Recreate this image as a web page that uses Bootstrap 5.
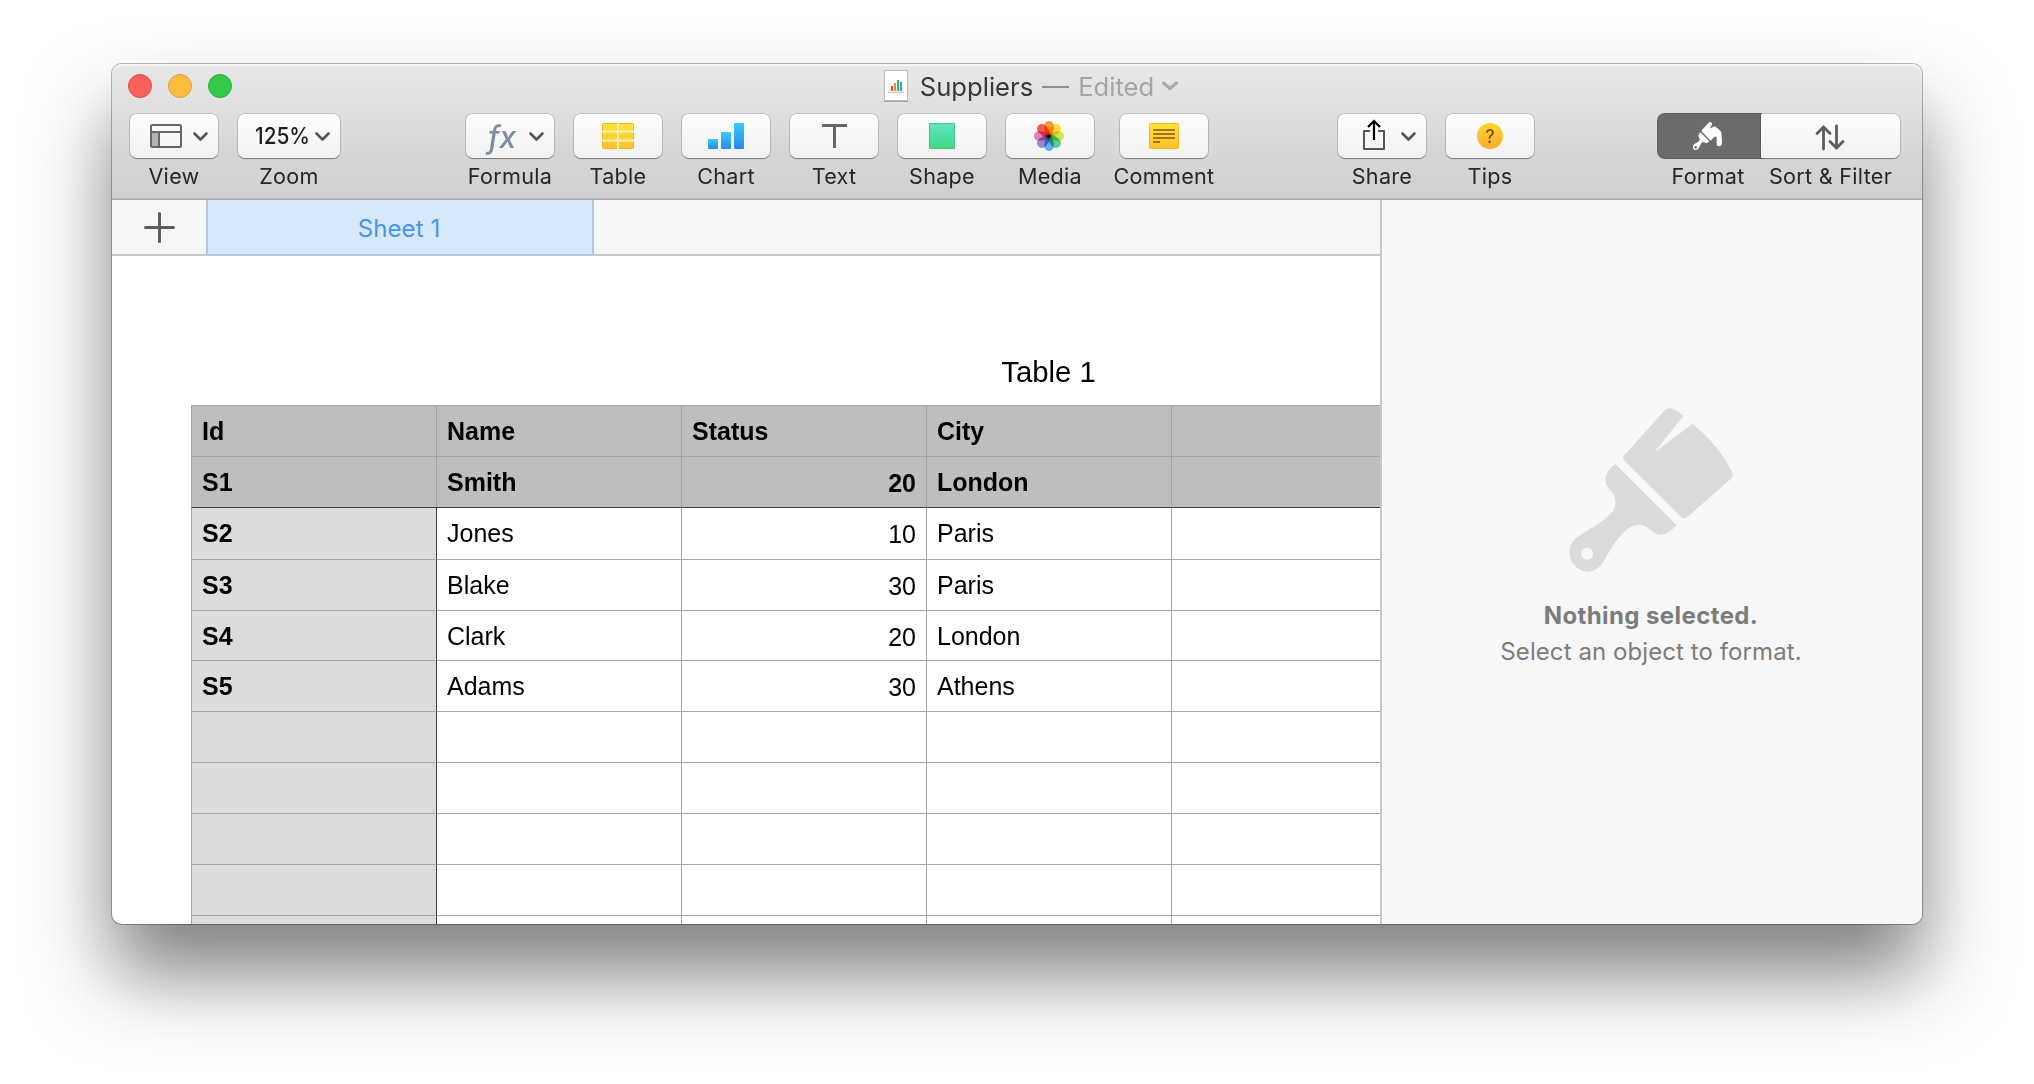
<!DOCTYPE html>
<html lang="en">
<head>
<meta charset="utf-8">
<title>Suppliers</title>
<link rel="stylesheet" href="https://cdn.jsdelivr.net/npm/bootstrap@5.3.0/dist/css/bootstrap.min.css">
<script src="https://cdn.jsdelivr.net/npm/bootstrap@5.3.0/dist/js/bootstrap.bundle.min.js"></script>
<style>
body{background:#fff;font-family:Inter,"Liberation Sans",sans-serif;height:1084px;overflow:hidden;padding-top:64px;color:#262626}
.win{width:1810px;height:860px;border-radius:10px;background:#fff;box-shadow:0 0 0 1px rgba(0,0,0,.27),0 50px 80px rgba(0,0,0,.5)}
.chrome{height:136px;flex:none;border-radius:10px 10px 0 0;background:linear-gradient(#e8e8e8,#cfcfcf);border-bottom:1px solid #a9a9a9;box-shadow:inset 0 2px 0 rgba(255,255,255,.55),inset 0 -1px 0 #bebebe}
.titlebar{height:50px;padding:10px 16px 0}
.lights{width:200px;gap:16px}
.light{width:24px;height:24px;border-radius:50%}
.l-red{background:#fc605c;border:1px solid #e0443f}
.l-amber{background:#fdbc40;border:1px solid #dfa033}
.l-green{background:#34c84a;border:1px solid #27aa35}
.doc-title{font-size:25.6px;line-height:30px;height:24px;color:#383838;padding-left:28px}
.doc-title span{padding-top:1px}
.doc-icon{margin-right:12px}
.edited{color:#a5a5a5}
.dash{width:27px;height:2px;background:#8f8f8f;margin:2px 9px 0}
.toolbar{padding-left:18px}
.tool-set{gap:20px}
.tool{width:88px}
.tool-zoom{width:102px}
.tool-wide{width:100px}
.key{height:44px;width:88px;background:linear-gradient(#fefefe,#f1f1f1);border-radius:7px;box-shadow:0 0 0 1px rgba(0,0,0,.13),0 1px 1px rgba(0,0,0,.35)}
.key svg{display:block}
.key svg text{font-family:Inter,sans-serif}
.chev{fill:none;stroke:#555;stroke-width:2.6;stroke-linecap:round;stroke-linejoin:round}
.tool-zoom .key{width:102px}
.cap{font-size:21.6px;line-height:26px;margin-top:5px;letter-spacing:.28px;white-space:nowrap}
.set-b{margin-left:126px}.set-c{margin-left:124px}.set-d{margin-left:124px}
.seg-l{width:103px}.seg-r{width:139px}
.seg-l .key{width:103px;border-radius:7px 0 0 7px;background:#6b6b6b;box-shadow:0 0 0 1px #616161}
.seg-l .cap{margin-left:-3px}
.seg-r .key{width:139px;border-radius:0 7px 7px 0}
.main-area{width:1268px}
.sheetbar{height:56px;background:#f6f6f6;border-bottom:2px solid #c8c8c8}
.addbtn{width:94px;height:54px;padding-left:1px}
.sheet-tab{width:388px;height:56px;background:#d8e8fb;border:2px solid #b8c6dc;border-top:0;color:#4794eb;font-size:24px;letter-spacing:.1px;padding:4px 2px 0 0}
.canvas-pane{height:668px;padding-left:79px;border-radius:0 0 0 10px}
.tbl-title{width:1715px;font:29.3px/34px "Liberation Sans",sans-serif;color:#000;padding-top:99px;height:149px}
.sheet-grid{width:1715px;table-layout:fixed;border-collapse:separate;border-spacing:0;font:25px/28px "Liberation Sans",sans-serif;color:#000}
.sheet-grid td,.sheet-grid th{border:0 solid #a5a5a5;border-width:1px 0 0 1px;padding:11px 10px 0;vertical-align:top;height:51px}
.sheet-grid .n{text-align:right;padding-top:12px}
.sheet-grid th{background:#dcdcdc;font-weight:bold}
.sheet-grid thead th{background:#bdbfbe;border-color:#a2a4a3}
.sheet-grid tbody td:nth-child(2){border-left-color:#3f3f3f}
.sheet-grid .first>*{border-top-color:#3f3f3f;height:52px}
.sheet-grid .short>*{height:50px}
.inspector{background:#f7f7f7;border-left:2px solid #c8c8c8;border-radius:0 0 10px 0;color:#7c7c7c;padding:208px 2px 0 0;font-size:24px;line-height:36px;letter-spacing:.08px}
.inspector strong{letter-spacing:.4px}
.brush{margin-bottom:26px}
.petal{mix-blend-mode:multiply}
.flower{isolation:isolate}
</style>
</head>
<body>
<svg width="0" height="0" class="position-absolute"><defs>
<linearGradient id="gy" x2="0" y2="1"><stop stop-color="#ffe634"/><stop offset="1" stop-color="#ffc02d"/></linearGradient>
<linearGradient id="gb" x2="0" y2="1"><stop stop-color="#35cdf8"/><stop offset="1" stop-color="#2b87ec"/></linearGradient>
<linearGradient id="gg" x2="0" y2="1"><stop stop-color="#67e3c0"/><stop offset=".6" stop-color="#47dda0"/><stop offset="1" stop-color="#4bd778"/></linearGradient>
<linearGradient id="go" x2="0" y2="1"><stop stop-color="#ffd52e"/><stop offset="1" stop-color="#ffab2c"/></linearGradient>
</defs></svg>
<div class="win mx-auto d-flex flex-column">
 <header class="chrome">
  <div class="titlebar d-flex justify-content-between align-items-start">
   <div class="lights d-flex"><span class="light l-red"></span><span class="light l-amber"></span><span class="light l-green"></span></div>
   <div class="doc-title d-flex align-items-center">
    <svg width="24" height="32" viewBox="0 0 24 32" class="doc-icon"><path d="M.5.5h23v30H.5z" fill="#fff" stroke="#bdbdbd"/><path d="M0 31.500h24" stroke="#a5a5a5"/><path d="M4 18h16M4 20.500h16" stroke="#e4e4e4"/><path d="M4 22.500h16" stroke="#c6c6c6"/><path d="M8 21v-5" stroke="#e6435b" stroke-width="2"/><path d="M11 21v-8" stroke="#f58a35" stroke-width="2"/><path d="M14 21V10" stroke="#2fc04e" stroke-width="2"/><path d="M17 21v-9" stroke="#2b9bea" stroke-width="2"/></svg>
    <span>Suppliers</span><span class="dash"></span><span class="edited">Edited</span>
    <svg width="16" height="10" class="ms-2"><path d="M1.500 2 8 7.500 14.500 2" fill="none" stroke="#a9a9a9" stroke-width="3" stroke-linecap="round"/></svg>
   </div>
   <div class="lights"></div>
  </div>
  <div class="toolbar d-flex">
   <div class="tool-set d-flex">
    <div class="tool d-flex flex-column align-items-center">
     <div class="key"><svg width="88" height="44" fill="none" stroke="#666" stroke-width="2"><path d="M21 18h8v15h-8z" fill="#b4b4b4" stroke="none"/><rect x="21" y="11" width="30" height="22" rx="1.500"/><path d="M21 18h30M29 18v15"/><path d="M64.500 19.500l6 6 6-6" class="chev"/></svg></div>
     <div class="cap">View</div></div>
    <div class="tool-zoom d-flex flex-column align-items-center">
     <div class="key"><svg width="102" height="44"><text x="17" y="30" font-size="22.500" font-weight="500" textLength="55" lengthAdjust="spacingAndGlyphs" fill="#1c1c1c">125%</text><path d="M78.500 19.500l6 6 6-6" class="chev"/></svg></div>
     <div class="cap">Zoom</div></div>
   </div>
   <div class="tool-set set-b d-flex">
    <div class="tool d-flex flex-column align-items-center">
     <div class="key"><svg width="88" height="44"><text x="22" y="33.500" font-size="30" font-style="italic" font-weight="500" textLength="28" lengthAdjust="spacingAndGlyphs" fill="#7d8ca3">fx</text><path d="M64.500 19.500l6 6 6-6" class="chev"/></svg></div>
     <div class="cap">Formula</div></div>
    <div class="tool d-flex flex-column align-items-center">
     <div class="key"><svg width="88" height="44"><rect x="28.500" y="9.500" width="31" height="25" rx="1" fill="url(#gy)" stroke="#eeb52a"/><path d="M44 9v26M28 17.500h32M28 26.500h32" stroke="#fff3b8" stroke-width="2"/></svg></div>
     <div class="cap">Table</div></div>
    <div class="tool d-flex flex-column align-items-center">
     <div class="key"><svg width="88" height="44" fill="url(#gb)"><rect x="26" y="25" width="10" height="10" rx="1"/><rect x="39" y="18" width="10" height="17" rx="1"/><rect x="52" y="9" width="10" height="26" rx="1"/></svg></div>
     <div class="cap">Chart</div></div>
    <div class="tool d-flex flex-column align-items-center">
     <div class="key"><svg width="88" height="44"><path d="M32 11.500h25M44.500 11.500v22.500" stroke="#666" stroke-width="3"/></svg></div>
     <div class="cap">Text</div></div>
    <div class="tool d-flex flex-column align-items-center">
     <div class="key"><svg width="88" height="44"><rect x="31.500" y="9.500" width="25" height="25" fill="url(#gg)" stroke="#46c98a"/></svg></div>
     <div class="cap">Shape</div></div>
    <div class="tool d-flex flex-column align-items-center">
     <div class="key"><svg width="88" height="44"><g transform="translate(43 22)" class="flower">
      <path class="petal" d="M-1.500 1C-4.500-3-4.800-7-4.800-10.200a4.800 4.800 0 0 1 9.600 0C4.800-7 4.500-3 1.500 1z" fill="#fb9738"/>
      <path class="petal" d="M-1 0C-4.500-3-4.800-7-4.800-10.200a4.800 4.800 0 0 1 9.600 0C4.800-7 4.500-3 1 0z" fill="#ffdb3a" transform="rotate(45)"/>
      <path class="petal" d="M-1.500 1C-4.500-3-4.800-7-4.800-10.200a4.800 4.800 0 0 1 9.600 0C4.800-7 4.500-3 1.500 1z" fill="#cfe550" transform="rotate(90)"/>
      <path class="petal" d="M-1.500 1C-4.500-3-4.800-7-4.800-10.200a4.800 4.800 0 0 1 9.600 0C4.800-7 4.500-3 1.500 1z" fill="#5ccb92" transform="rotate(135)"/>
      <path class="petal" d="M-1.500 1C-4.500-3-4.800-7-4.800-10.200a4.800 4.800 0 0 1 9.600 0C4.800-7 4.500-3 1.500 1z" fill="#5fb0f0" transform="rotate(180)"/>
      <path class="petal" d="M-1.500 1C-4.500-3-4.800-7-4.800-10.200a4.800 4.800 0 0 1 9.600 0C4.800-7 4.500-3 1.500 1z" fill="#9d88cf" transform="rotate(225)"/>
      <path class="petal" d="M-1.500 1C-4.500-3-4.800-7-4.800-10.200a4.800 4.800 0 0 1 9.600 0C4.800-7 4.500-3 1.500 1z" fill="#dc82b6" transform="rotate(270)"/>
      <path class="petal" d="M-1.500 1C-4.500-3-4.800-7-4.800-10.200a4.800 4.800 0 0 1 9.600 0C4.800-7 4.500-3 1.500 1z" fill="#fd5550" transform="rotate(315)"/>
      </g></svg></div>
     <div class="cap">Media</div></div>
    <div class="tool-wide d-flex flex-column align-items-center">
     <div class="key"><svg width="88" height="44"><rect x="29.500" y="9.500" width="29" height="25" rx="1" fill="url(#gy)" stroke="#efb72b"/><path d="M33 16h22M33 20h22M33 24h22M33 28h7" stroke="#a47420" stroke-width="2"/></svg></div>
     <div class="cap">Comment</div></div>
   </div>
   <div class="tool-set set-c d-flex">
    <div class="tool d-flex flex-column align-items-center">
     <div class="key"><svg width="88" height="44" fill="none"><path d="M32 17h-6v18h20V17h-6" stroke="#555" stroke-width="2" stroke-linejoin="round"/><path d="M36 26V8M30 13l6-6 6 6" stroke="#000" stroke-width="2.200"/><path d="M64.500 19.500l6 6 6-6" class="chev"/></svg></div>
     <div class="cap">Share</div></div>
    <div class="tool d-flex flex-column align-items-center">
     <div class="key"><svg width="88" height="44"><circle cx="44" cy="22" r="13" fill="url(#go)"/><text x="44" y="28.500" font-size="18" font-weight="500" text-anchor="middle" fill="#7a5212">?</text></svg></div>
     <div class="cap">Tips</div></div>
   </div>
   <div class="set-d d-flex">
    <div class="seg-l d-flex flex-column align-items-center">
     <div class="key"><svg width="103" height="44"><g transform="translate(22 -9) scale(.3333)" fill="#fff"><path d="M66 75 83 56Q89 47 96 54L96 59 89 71 103 64Q112 67 124 82L126 108Q127 124 118 124 108 124 110 111L110 98Q107 93 103 96L95 104Q92 107 89 104L66 80Q64 78 66 75z"/><path fill-rule="evenodd" d="M61 82 88 109Q80 118 73 112 67 108 63 116L56 130Q50 138 42 134 35 126 42 118L55 110Q62 104 57 98 52 90 61 82zM47 123a4 4 0 1 0 .1 0z"/></g></svg></div>
     <div class="cap">Format</div></div>
    <div class="seg-r d-flex flex-column align-items-center">
     <div class="key"><svg width="139" height="44"><path d="M62.500 35V13M56 19.500l6.500-6.500 6.500 6.500M75.500 12v22M69 27.500l6.500 6.500 6.500-6.500" fill="none" stroke="#5f5f5f" stroke-width="2.800" stroke-linecap="round"/></svg></div>
     <div class="cap">Sort &amp; Filter</div></div>
   </div>
  </div>
 </header>
 <div class="d-flex flex-grow-1">
  <main class="main-area d-flex flex-column flex-shrink-0">
   <div class="sheetbar d-flex flex-shrink-0">
    <div class="addbtn d-flex align-items-center justify-content-center"><svg width="31" height="31"><path d="M15.500 1.500v28M1.500 15.500h28" stroke="#5c5c5c" stroke-width="3" stroke-linecap="round"/></svg></div>
    <div class="sheet-tab d-flex align-items-center justify-content-center">Sheet 1</div>
   </div>
   <div class="canvas-pane overflow-hidden">
    <div class="tbl-title text-center">Table 1</div>
    <table class="sheet-grid">
     <thead>
      <tr><th>Id</th><th>Name</th><th>Status</th><th>City</th><th></th><th></th><th></th></tr>
      <tr><th>S1</th><th>Smith</th><th class="n">20</th><th>London</th><th></th><th></th><th></th></tr>
     </thead>
     <tbody>
      <tr class="first"><th>S2</th><td>Jones</td><td class="n">10</td><td>Paris</td><td></td><td></td><td></td></tr>
      <tr><th>S3</th><td>Blake</td><td class="n">30</td><td>Paris</td><td></td><td></td><td></td></tr>
      <tr class="short"><th>S4</th><td>Clark</td><td class="n">20</td><td>London</td><td></td><td></td><td></td></tr>
      <tr><th>S5</th><td>Adams</td><td class="n">30</td><td>Athens</td><td></td><td></td><td></td></tr>
      <tr><th></th><td></td><td></td><td></td><td></td><td></td><td></td></tr>
      <tr><th></th><td></td><td></td><td></td><td></td><td></td><td></td></tr>
      <tr><th></th><td></td><td></td><td></td><td></td><td></td><td></td></tr>
      <tr><th></th><td></td><td></td><td></td><td></td><td></td><td></td></tr>
      <tr><th></th><td></td><td></td><td></td><td></td><td></td><td></td></tr>
     </tbody>
    </table>
   </div>
  </main>
  <aside class="inspector flex-grow-1 d-flex flex-column align-items-center">
   <svg class="brush" width="164" height="164" viewBox="267 84 492 492" fill="#dbdbdb"><path d="M431 228 553 92Q562 82 576 86 592 90 610 108L522 218 638 131Q720 200 757 278 760 290 752 297L622 411Q612 419 603 411L432 241Q427 234 431 228z"/><path fill-rule="evenodd" d="M406 252 590 436Q570 457 553 463 530 468 512 450 488 430 466 435 445 438 415 475 400 492 375 538 355 575 323 575 290 574 273 541 262 510 277 487 285 473 330 447 370 425 400 392 412 375 402 347 396 335 384 322 372 305 378 287 385 267 406 252zM321 503a18 18 0 1 0 .1 0z"/></svg>
   <strong>Nothing selected.</strong>
   <span>Select an object to format.</span>
  </aside>
 </div>
</div>
</body>
</html>
